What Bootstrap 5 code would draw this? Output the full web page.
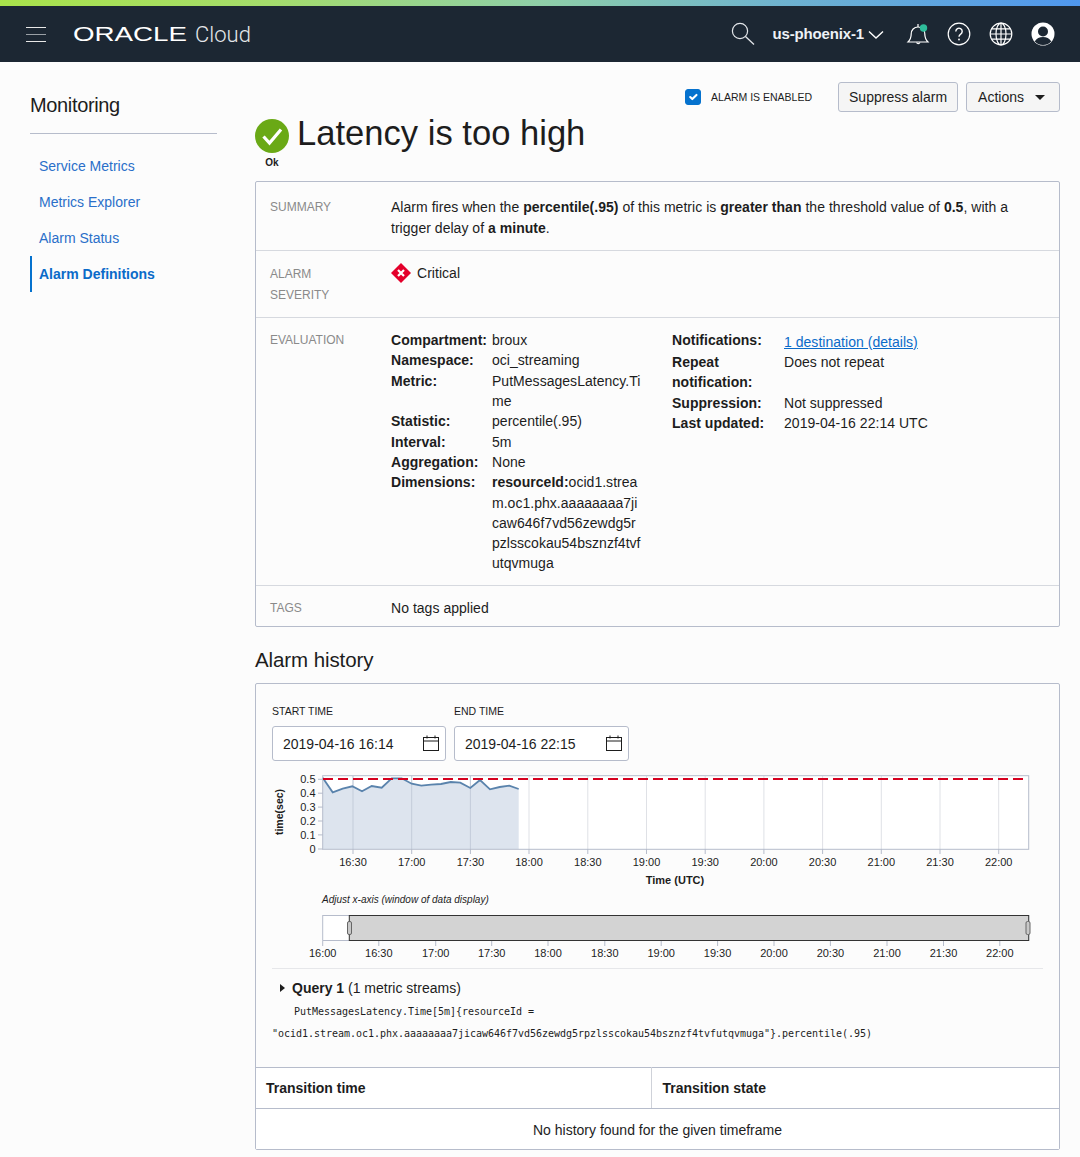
<!DOCTYPE html>
<html lang="en">
<head>
<meta charset="utf-8">
<title>Latency is too high</title>
<link href="https://cdn.jsdelivr.net/npm/bootstrap@5.3.0/dist/css/bootstrap.min.css" rel="stylesheet">
<style>
html,body{margin:0;background:#fcfcfc;}
body{font-family:"Liberation Sans",Arial,sans-serif;font-size:14px;line-height:20.3px;color:#1d1d1d;width:1080px;overflow-x:hidden;}
.rainbow{height:6px;background:linear-gradient(90deg,#a9e34b 0%,#a4dc6c 25%,#8fcfa8 50%,#6fb3cf 72%,#4f97ee 100%);}
.topbar{height:56px;background:#1c2733;color:#fff;padding:0;}
.burger{width:20px;margin-left:26px;display:flex;flex-direction:column;gap:6px;}
.burger i{display:block;height:1px;background:#e8e8e8;}
.burger i:nth-child(2){background:#9aa0a6;}
.brand{margin-left:27px;display:block;}
.region{font-size:15px;font-weight:700;color:#eef2f6;letter-spacing:-.15px;}
.page{display:flex;}
.sidecol{width:187px;margin-left:30px;flex:none;}
.sidetitle{font-size:20px;line-height:24px;margin-top:31px;padding-bottom:16px;border-bottom:1px solid #b6bccb;color:#1d1d1d;letter-spacing:-.35px;}
.sidenav{margin-top:14px;}
.sidenav .nav-link{height:36px;padding:0 0 0 9px;line-height:37px;color:#2a6fc9;font-size:14px;}
.sidenav .nav-link.active{color:#0b6bc9;font-weight:700;border-left:2px solid #0572ce;padding-left:7px;}
.maincol{margin-left:38px;width:805px;flex:none;}
.topactions{height:50px;padding-top:20px;gap:8px;}
.topactions .form-check-input{width:16px;height:16px;margin:-1px 2px 0 0;border-radius:3px;background-color:#0572ce;border-color:#0572ce;float:none;}
.enlabel{font-size:10.500px;color:#1d1d1d;margin-right:18px;line-height:16px;}
.plainbtn{height:30px;padding:0 10px;font-size:14px;line-height:28px;background:#f5f5f5;border:1px solid #b6bccb;border-radius:3px;color:#1d1d1d;}
.plainbtn.dropdown-toggle{padding-right:14px;padding-left:11px;}
.plainbtn.dropdown-toggle::after{margin-left:11px;border-top-width:5px;border-left-width:5.500px;border-right-width:5.500px;vertical-align:2px;}
.titlerow{height:69px;position:relative;padding-top:7px;}
.statusblock{width:34px;flex:none;text-align:center;}
.statusword{font-size:10px;font-weight:700;line-height:12px;margin-top:4px;color:#1d1d1d;}
.pagetitle{font-size:34.600px;line-height:40px;font-weight:400;margin:-6px 0 0 8px;color:#1d1d1d;}
.panel{border:1px solid #b6bccb;border-radius:2px;background:#fcfcfc;}
.detailrow{display:flex;border-bottom:1px solid #d6d9df;padding:15px 14px 0;}
.detailrow:last-child{border-bottom:0;}
.dlabel{width:121px;flex:none;font-size:12px;color:#8a8a8a;line-height:21px;}
.dvalue{flex:1;letter-spacing:.03px;}
.summary{height:69px;line-height:21px;}
.severity{height:67px;}
.severity .dlabel{margin-top:-2px;}
.sevvalue{margin-top:-3px;gap:6px;}
.evaluation{height:268px;}
.evalcols{margin-top:-2.850px;}
.tagsrow{height:40px;padding-top:12px;}
.kvgrid{display:grid;row-gap:0;align-content:start;}
.kvleft{grid-template-columns:101px 180px;width:281px;}
.kvright{grid-template-columns:112px 200px;}
.kvgrid b{font-weight:700;}
.linkcell{padding-top:1.600px;}
.dlink{color:#0b6bc9;text-decoration:underline;}
.historyhead{font-size:20.500px;line-height:26px;font-weight:400;margin:20px 0 10px;color:#1d1d1d;letter-spacing:-.1px;}
.card2{border:1px solid #b6bccb;border-radius:2px;background:#fcfcfc;}
.filters{padding:21px 16px 0;gap:8px;height:84px;}
.fieldwrap{display:flex;flex-direction:column;}
.fieldlbl{font-size:10.500px;line-height:13px;margin-bottom:8px;color:#1d1d1d;}
.datebox{height:35px;border:1px solid #b6bccb;border-radius:3px;background:#fff;align-items:center;padding-right:5px;}
.datebox .form-control{border:0;background:transparent;padding:0 0 0 10px;font-size:14px;color:#1d1d1d;height:33px;border-radius:3px;box-shadow:none;}
.calicon{flex:none;}
.box1{width:174px;}
.box2{width:175px;}
.chartsvg{display:block;}
.chartsvg text{font-family:"Liberation Sans",Arial,sans-serif;fill:#1d1d1d;}
.divide{height:1px;background:#e6e7ea;margin:9px 16px 0;}
.querytitle{margin:9px 0 0 36px;position:relative;line-height:20px;}
.caretmark{position:absolute;left:-12px;top:6px;width:0;height:0;border-left:5px solid #1d1d1d;border-top:4px solid transparent;border-bottom:4px solid transparent;}
.querycode{font-family:"DejaVu Sans Mono","Liberation Mono",monospace;font-size:10px;line-height:22px;margin:3px 0 0;padding:0 16px;color:#1d1d1d;height:66px;letter-spacing:-.02px;}
.codeindent{display:block;padding-left:22px;}
.codeline{display:block;}
.histtable{margin:0;table-layout:fixed;width:100%;border-top:1px solid #b6bccb;background:#fff;}
.histtable th,.histtable td{padding:0 10px;vertical-align:middle;font-size:14px;color:#1d1d1d;box-shadow:none;background:#fff;}
.histtable th{height:41px;border-bottom:1px solid #b6bccb;font-weight:700;}
.histtable th + th{border-left:1px solid #cfd2d9;padding-left:11px;}
.histtable td{height:40px;border:0;text-align:center;padding-top:2px;}
</style>
</head>
<body>
<div class="rainbow"></div>
<nav class="navbar topbar d-flex align-items-center flex-nowrap justify-content-start">
  <div class="burger"><i></i><i></i><i></i></div>
  <svg class="brand" width="180" height="24" viewBox="0 0 180 24">
    <text x="0" y="19" font-family="Liberation Sans" font-size="21" fill="#fff" textLength="114" lengthAdjust="spacingAndGlyphs">ORACLE</text>
    <text x="122" y="20" font-family="Roboto" font-weight="300" font-size="22" fill="#e4e7ea">Cloud</text>
  </svg>
  <div class="d-flex align-items-center ms-auto position-relative flex-nowrap">
    <svg width="26" height="26" viewBox="0 0 26 26" fill="none" stroke="#e3e6ea" stroke-width="1.2" style="margin-right:16px"><circle cx="10" cy="10" r="7.6"/><path d="M15.5 15.5L24 23.5"/></svg>
    <span class="region">us-phoenix-1</span>
    <svg width="16" height="10" viewBox="0 0 16 10" fill="none" stroke="#fff" stroke-width="1.4" style="margin:2px 22px 0 4px"><path d="M1 1.5l7 6.5 7-6.5"/></svg>
    <svg width="24" height="26" viewBox="0 0 24 26" fill="none" stroke="#fff" stroke-width="1.2" style="margin-right:17px"><path d="M2 21c2-2 3.200-3.500 3.200-8 0-4 2.800-7 6.800-7s6.800 3 6.800 7c0 4.500 1.200 6 3.200 8z"/><path d="M10.500 21.500a2 2 0 0 0 3.500 0M12 3v3"/><circle cx="17.500" cy="7" r="3.700" fill="#2ebd9b" stroke="none"/></svg>
    <svg width="24" height="24" viewBox="0 0 24 24" fill="none" stroke="#fff" stroke-width="1.2" style="margin-right:18px"><circle cx="12" cy="12" r="10.800"/><path d="M8.800 9.400a3.200 3.200 0 1 1 4.900 2.700c-1.100.7-1.700 1.300-1.700 2.600" stroke-width="1.400"/><circle cx="12" cy="17.500" r=".9" fill="#fff" stroke="none"/></svg>
    <svg width="24" height="24" viewBox="0 0 24 24" fill="none" stroke="#fff" stroke-width="1.2" style="margin-right:18px"><circle cx="12" cy="12" r="10.800"/><ellipse cx="12" cy="12" rx="5" ry="10.800"/><path d="M12 1.200v21.600M1.200 12h21.600M2.700 6.800h18.600M2.700 17.200h18.600"/></svg>
    <svg width="24" height="24" viewBox="0 0 24 24" style="margin-right:25px"><circle cx="12" cy="12" r="11.500" fill="#fff"/><circle cx="12" cy="9.500" r="5" fill="#1c2733"/><path d="M3.700 19.500c1.800-3.400 4.800-4.600 8.300-4.600s6.500 1.200 8.300 4.600a11.500 11.500 0 0 1-16.600 0z" fill="#1c2733"/></svg>
  </div>
</nav>

<div class="page">
  <aside class="sidecol">
    <div class="sidetitle">Monitoring</div>
    <nav class="nav flex-column sidenav">
      <a class="nav-link" href="#">Service Metrics</a>
      <a class="nav-link" href="#">Metrics Explorer</a>
      <a class="nav-link" href="#">Alarm Status</a>
      <a class="nav-link active" href="#">Alarm Definitions</a>
    </nav>
  </aside>
  <main class="maincol">
    <div class="d-flex justify-content-end align-items-center topactions">
      <input class="form-check-input" type="checkbox" checked aria-label="Alarm is enabled">
      <span class="enlabel">ALARM IS ENABLED</span>
      <button class="btn plainbtn" type="button">Suppress alarm</button>
      <button class="btn plainbtn dropdown-toggle" type="button">Actions</button>
    </div>
    <div class="d-flex titlerow">
      <div class="statusblock">
        <svg width="34" height="34" viewBox="0 0 34 34" class="d-block"><circle cx="17" cy="17" r="17" fill="#6aa916"/><path d="M8.500 17.500l6 6.500L26 10.500" fill="none" stroke="#fff" stroke-width="3.200"/></svg>
        <div class="statusword">Ok</div>
      </div>
      <h1 class="pagetitle">Latency is too high</h1>
    </div>

    <section class="panel">
      <div class="detailrow summary">
        <div class="dlabel">SUMMARY</div>
        <div class="dvalue">Alarm fires when the <b>percentile(.95)</b> of this metric is <b>greater than</b> the threshold value of <b>0.5</b>, with a trigger delay of <b>a minute</b>.</div>
      </div>
      <div class="detailrow severity">
        <div class="dlabel">ALARM<br>SEVERITY</div>
        <div class="dvalue d-flex sevvalue">
          <svg width="20" height="20" viewBox="0 0 20 20" style="flex:none"><path d="M10 0l10 10-10 10L0 10z" fill="#e4002b"/><path d="M7 7l6 6M13 7l-6 6" stroke="#fff" stroke-width="2.200"/></svg>
          <span>Critical</span>
        </div>
      </div>
      <div class="detailrow evaluation">
        <div class="dlabel" style="line-height:14px">EVALUATION</div>
        <div class="dvalue d-flex evalcols">
          <div class="kvgrid kvleft">
            <b>Compartment:</b><span>broux</span>
            <b>Namespace:</b><span>oci_streaming</span>
            <b>Metric:</b><span>PutMessagesLatency.Ti<br>me</span>
            <b>Statistic:</b><span>percentile(.95)</span>
            <b>Interval:</b><span>5m</span>
            <b>Aggregation:</b><span>None</span>
            <b>Dimensions:</b><span><b>resourceId:</b>ocid1.strea<br>m.oc1.phx.aaaaaaaa7ji<br>caw646f7vd56zewdg5r<br>pzlsscokau54bsznzf4tvf<br>utqvmuga</span>
          </div>
          <div class="kvgrid kvright">
            <b>Notifications:</b><span class="linkcell"><a class="dlink" href="#">1 destination (details)</a></span>
            <b>Repeat notification:</b><span>Does not repeat</span>
            <b>Suppression:</b><span>Not suppressed</span>
            <b>Last updated:</b><span>2019-04-16 22:14 UTC</span>
          </div>
        </div>
      </div>
      <div class="detailrow tagsrow">
        <div class="dlabel">TAGS</div>
        <div class="dvalue">No tags applied</div>
      </div>
    </section>

    <h2 class="historyhead">Alarm history</h2>

    <section class="card2">
      <div class="d-flex filters">
        <div class="fieldwrap box1">
          <label class="fieldlbl">START TIME</label>
          <div class="d-flex datebox">
            <input class="form-control" type="text" value="2019-04-16 16:14" aria-label="Start time">
            <svg class="calicon" width="18" height="17" viewBox="0 0 18 17" fill="none" stroke="#1d1d1d"><rect x="1.500" y="2.500" width="15" height="13"/><path d="M1.500 6h15M5 .5v3M13 .5v3"/></svg>
          </div>
        </div>
        <div class="fieldwrap box2">
          <label class="fieldlbl">END TIME</label>
          <div class="d-flex datebox">
            <input class="form-control" type="text" value="2019-04-16 22:15" aria-label="End time">
            <svg class="calicon" width="18" height="17" viewBox="0 0 18 17" fill="none" stroke="#1d1d1d"><rect x="1.500" y="2.500" width="15" height="13"/><path d="M1.500 6h15M5 .5v3M13 .5v3"/></svg>
          </div>
        </div>
      </div>

      <svg class="chartsvg" width="803" height="191" viewBox="256 768 803 191">
        <rect x="322.700" y="775.700" width="706" height="73.600" fill="#fff"/>
        <g stroke="#dfe1e6" stroke-width="1">
          <path d="M353 776v73M411.700 776v73M470.400 776v73M529 776v73M587.800 776v73M646.500 776v73M705.200 776v73M763.900 776v73M822.600 776v73M881.300 776v73M940 776v73M998.700 776v73"/>
        </g>
        <path d="M322.700 777.700L332.700 792.300 342.700 788.700 352.300 786.300 362 791.300 371.700 786 381.700 787.700 391.700 778.300 401.700 778.300 411.700 783.700 421.300 785.700 431 784.700 441 784 450.700 782 460.300 782.700 470.300 788 480 780 490 789.300 499.700 787 509.300 785.700 518.700 789V849H322.700Z" fill="#dde4ee"/>
        <path d="M353 776v73M411.700 776v73M470.400 776v73" stroke="#c3ccd9"/>
        <path d="M322.700 777.700L332.700 792.300 342.700 788.700 352.300 786.300 362 791.300 371.700 786 381.700 787.700 391.700 778.300 401.700 778.300 411.700 783.700 421.300 785.700 431 784.700 441 784 450.700 782 460.300 782.700 470.300 788 480 780 490 789.300 499.700 787 509.300 785.700 518.700 789" fill="none" stroke="#5a83ac" stroke-width="1.800"/>
        <rect x="322.700" y="775.700" width="706" height="73.600" fill="none" stroke="#b6bccb"/>
        <path d="M323 779H1024" stroke="#d5001f" stroke-width="2" stroke-dasharray="10 5"/>
        <path d="M318 779.300h5M318 793.200h5M318 807.100h5M318 821h5M318 834.900h5M318 849h5M353 849v5M411.700 849v5M470.400 849v5M529 849v5M587.800 849v5M646.500 849v5M705.200 849v5M763.900 849v5M822.600 849v5M881.300 849v5M940 849v5M998.700 849v5" stroke="#b6bccb"/>
        <g font-size="11" text-anchor="end">
          <text x="315.500" y="783">0.5</text><text x="315.500" y="797">0.4</text><text x="315.500" y="811">0.3</text><text x="315.500" y="825">0.2</text><text x="315.500" y="839">0.1</text><text x="315.500" y="853">0</text>
        </g>
        <text transform="translate(282.500 812) rotate(-90)" font-size="10.500" font-weight="700" text-anchor="middle">time(sec)</text>
        <g font-size="11" text-anchor="middle">
          <text x="353" y="866">16:30</text><text x="411.700" y="866">17:00</text><text x="470.400" y="866">17:30</text><text x="529" y="866">18:00</text><text x="587.800" y="866">18:30</text><text x="646.500" y="866">19:00</text><text x="705.200" y="866">19:30</text><text x="763.900" y="866">20:00</text><text x="822.600" y="866">20:30</text><text x="881.300" y="866">21:00</text><text x="940" y="866">21:30</text><text x="998.700" y="866">22:00</text>
        </g>
        <text x="675" y="884" font-size="11" font-weight="700" text-anchor="middle">Time (UTC)</text>
        <text x="322" y="903" font-size="10" font-style="italic">Adjust x-axis (window of data display)</text>
        <rect x="322.700" y="915.500" width="706" height="25" fill="#fff" stroke="#b6bccb"/>
        <rect x="349.300" y="915.500" width="679.400" height="25" fill="#d3d3d3" stroke="#333"/>
        <rect x="347.500" y="921.500" width="4" height="13" rx="1.500" fill="#c8c8c8" stroke="#666"/>
        <rect x="1026" y="921.500" width="4" height="13" rx="1.500" fill="#c8c8c8" stroke="#666"/>
        <path d="M322.700 941v5M378.800 941v5M435.700 941v5M491.700 941v5M548 941v5M604.800 941v5M661.200 941v5M717.600 941v5M774 941v5M830.400 941v5M887 941v5M943.500 941v5M999.800 941v5" stroke="#b6bccb"/>
        <g font-size="11" text-anchor="middle">
          <text x="322.700" y="957">16:00</text><text x="378.800" y="957">16:30</text><text x="435.700" y="957">17:00</text><text x="491.700" y="957">17:30</text><text x="548" y="957">18:00</text><text x="604.800" y="957">18:30</text><text x="661.200" y="957">19:00</text><text x="717.600" y="957">19:30</text><text x="774" y="957">20:00</text><text x="830.400" y="957">20:30</text><text x="887" y="957">21:00</text><text x="943.500" y="957">21:30</text><text x="999.800" y="957">22:00</text>
        </g>
      </svg>

      <div class="divide"></div>
      <div class="querytitle"><span class="caretmark"></span><b>Query 1</b> (1 metric streams)</div>
      <p class="querycode"><span class="codeindent">PutMessagesLatency.Time[5m]{resourceId =</span><span class="codeline">"ocid1.stream.oc1.phx.aaaaaaaa7jicaw646f7vd56zewdg5rpzlsscokau54bsznzf4tvfutqvmuga"}.percentile(.95)</span></p>

      <table class="table histtable">
        <thead><tr><th style="width:395px">Transition time</th><th>Transition state</th></tr></thead>
        <tbody><tr><td colspan="2">No history found for the given timeframe</td></tr></tbody>
      </table>
    </section>
  </main>
</div>
<script src="https://cdn.jsdelivr.net/npm/bootstrap@5.3.0/dist/js/bootstrap.bundle.min.js"></script>
</body>
</html>
